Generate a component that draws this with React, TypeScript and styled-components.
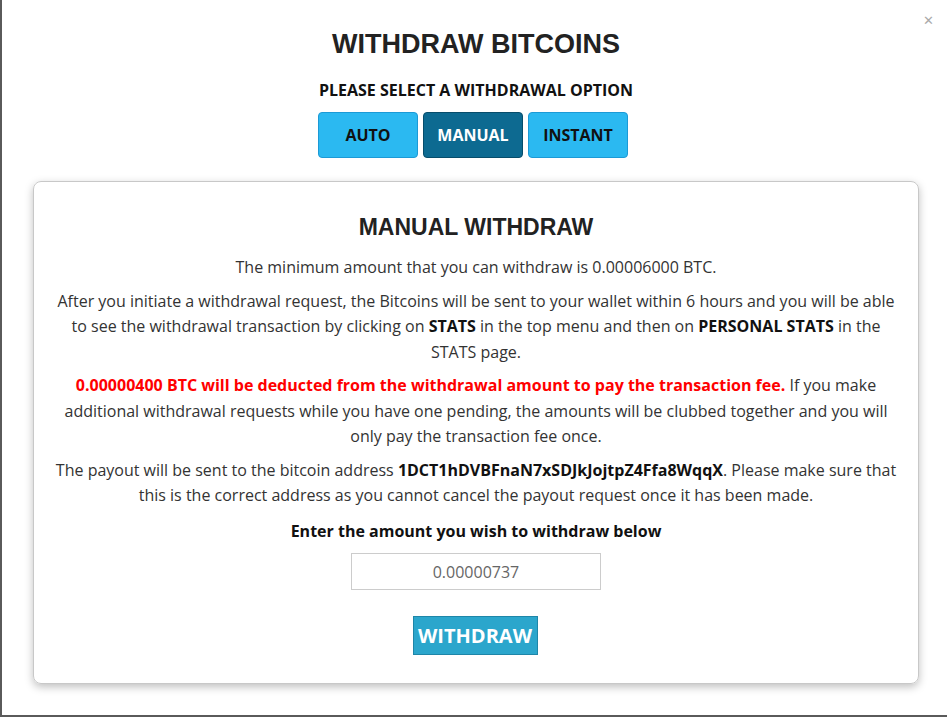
import React, { useState } from "react";
import styled, { createGlobalStyle } from "styled-components";

const GlobalStyle = createGlobalStyle`
  html, body {
    margin: 0;
    padding: 0;
    background: #5a5a5a;
  }
  body {
    font-family: "Open Sans", "Liberation Sans", Arial, sans-serif;
    -webkit-font-smoothing: antialiased;
  }
`;

const options = ["AUTO", "MANUAL", "INSTANT"];

const App = () => {
  const [option, setOption] = useState("MANUAL");
  const [amount, setAmount] = useState("");

  return (
    <>
      <GlobalStyle />
      <Modal>
        <CloseButton aria-label="close">&#x2715;</CloseButton>
        <Title>WITHDRAW BITCOINS</Title>
        <Subtitle>PLEASE SELECT A WITHDRAWAL OPTION</Subtitle>
        <OptionRow>
          {options.map((o) => (
            <OptionButton key={o} $active={o === option} onClick={() => setOption(o)}>
              {o}
            </OptionButton>
          ))}
        </OptionRow>
        <Card>
          <CardTitle>MANUAL WITHDRAW</CardTitle>
          <Text>The minimum amount that you can withdraw is 0.00006000 BTC.</Text>
          <Text>
            After you initiate a withdrawal request, the Bitcoins will be sent to your wallet within 6
            hours and you will be able to see the withdrawal transaction by clicking on <b>STATS</b> in
            the top menu and then on <b>PERSONAL STATS</b> in the STATS page.
          </Text>
          <Text>
            <Warning>0.00000400 BTC will be deducted from the withdrawal amount to pay the transaction fee.</Warning>{" "}
            If you make additional withdrawal requests while you have one pending, the amounts will be
            clubbed together and you will only pay the transaction fee once.
          </Text>
          <Text>
            The payout will be sent to the bitcoin address <b>1DCT1hDVBFnaN7xSDJkJojtpZ4Ffa8WqqX</b>.
            Please make sure that this is the correct address as you cannot cancel the payout request
            once it has been made.
          </Text>
          <Label htmlFor="amount">Enter the amount you wish to withdraw below</Label>
          <AmountInput
            id="amount"
            placeholder="0.00000737"
            value={amount}
            onChange={(e) => setAmount(e.target.value)}
          />
          <WithdrawButton>WITHDRAW</WithdrawButton>
        </Card>
      </Modal>
    </>
  );
};

const Modal = styled.div`
  position: relative;
  box-sizing: border-box;
  margin-left: 2px;
  height: 715px;
  background: #fff;
  padding: 29px 28px 0 31px;
  display: flex;
  flex-direction: column;
  align-items: center;
`;

const CloseButton = styled.button`
  position: absolute;
  top: 13px;
  right: 13px;
  border: 0;
  background: transparent;
  color: #aaa;
  font-family: "DejaVu Sans", sans-serif;
  font-weight: bold;
  font-size: 13px;
  padding: 0;
  cursor: pointer;
`;

const Title = styled.h1`
  margin: 0;
  font-family: "Liberation Sans", Arial, sans-serif;
  font-size: 27px;
  line-height: 30px;
  font-weight: bold;
  color: #222;
`;

const Subtitle = styled.h4`
  margin: 21px 0 0;
  font-size: 16px;
  line-height: 20px;
  font-weight: bold;
  color: #111;
`;

const OptionRow = styled.div`
  display: flex;
  gap: 5px;
  margin: 12px 6px 0 0;
`;

const OptionButton = styled.button<{ $active?: boolean }>`
  box-sizing: border-box;
  width: 100px;
  height: 46px;
  border-radius: 4px;
  border: 1px solid ${(p) => (p.$active ? "#074d6b" : "#1c9ad6")};
  background: ${(p) => (p.$active ? "#0d6a91" : "#2bb9f1")};
  color: ${(p) => (p.$active ? "#fff" : "#111")};
  font-family: "Open Sans", sans-serif;
  font-weight: bold;
  font-size: 16px;
  padding: 0;
  cursor: pointer;
`;

const Card = styled.div`
  box-sizing: border-box;
  align-self: stretch;
  margin-top: 23px;
  border: 1px solid #c8c8c8;
  border-radius: 8px;
  box-shadow: 0 3px 8px rgba(0, 0, 0, 0.25);
  padding: 30px 17px 28px;
  display: flex;
  flex-direction: column;
  align-items: center;
  text-align: center;
`;

const CardTitle = styled.h2`
  margin: 0 0 13px;
  font-family: "Liberation Sans", Arial, sans-serif;
  font-size: 23px;
  line-height: 30px;
  font-weight: bold;
  color: #222;
`;

const Text = styled.p`
  margin: 0 0 8px;
  font-size: 16px;
  line-height: 25.5px;
  color: #333;

  b {
    color: #111;
  }
`;

const Warning = styled.b`
  && {
    color: #ff0000;
  }
`;

const Label = styled.label`
  margin-top: 2px;
  font-size: 16px;
  line-height: 25.5px;
  font-weight: bold;
  color: #111;
`;

const AmountInput = styled.input`
  box-sizing: border-box;
  width: 250px;
  height: 37px;
  margin-top: 9px;
  border: 1px solid #ccc;
  text-align: center;
  font-family: "Open Sans", sans-serif;
  font-size: 16px;
  color: #555;

  &::placeholder {
    color: #666;
  }
`;

const WithdrawButton = styled.button`
  box-sizing: border-box;
  width: 125px;
  height: 39px;
  margin: 26px 2px 0 0;
  border: 1px solid #1e86a8;
  background: #2ba6cc;
  color: #fff;
  font-family: "Open Sans", sans-serif;
  font-weight: bold;
  font-size: 20px;
  padding: 0;
  cursor: pointer;
`;

export default App;
